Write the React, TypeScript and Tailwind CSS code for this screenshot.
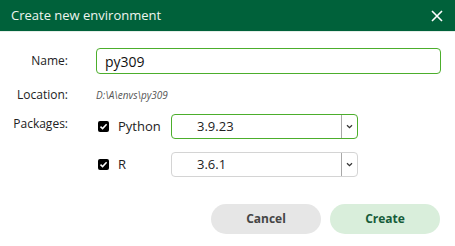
import React from "react";

function Check() {
  return (
    <span className="flex h-[11px] w-[11px] items-center justify-center rounded-[2px] bg-black">
      <svg width="9" height="9" viewBox="0 0 9 9">
        <path d="M1.5 4.6 L3.6 6.6 L7.6 2.3" stroke="white" strokeWidth="1.5" fill="none" />
      </svg>
    </span>
  );
}

function Select({ value, active }: { value: string; active?: boolean }) {
  return (
    <div
      className={
        "flex h-[25px] w-[187px] items-stretch rounded-[4px] border " +
        (active ? "border-[#4cae2c]" : "border-[#d4d4d4]")
      }
    >
      <div className="flex flex-1 items-center pl-[25px] text-[13px] text-[#222]">{value}</div>
      <div className="w-px bg-[#a8a8a8]" />
      <div className="flex w-[15px] items-center justify-center">
        <svg width="7" height="5" viewBox="0 0 7 5">
          <path d="M1 1.2 L3.5 3.6 L6 1.2" stroke="#333" strokeWidth="1.3" fill="none" />
        </svg>
      </div>
    </div>
  );
}

export default function App() {
  return (
    <div
      className="h-[246px] w-[455px] bg-white"
      style={{ fontFamily: '"Open Sans", "Noto Sans", sans-serif' }}
    >
      <div className="flex h-[31px] items-center justify-between bg-[#00613a] pl-[11px] pr-[12px]">
        <span className="text-[13px] text-[#eef5ee]">Create new environment</span>
        <svg width="12" height="12" viewBox="0 0 12 12">
          <path d="M1 1 L11 11 M11 1 L1 11" stroke="white" strokeWidth="1.6" />
        </svg>
      </div>
      <div className="h-px bg-[#e6eee8]" />
      <div className="pt-[16px]">
        <div className="flex items-center">
          <div className="w-[68px] text-right text-[12px] text-[#222]">Name:</div>
          <div className="ml-[28px] flex h-[26px] w-[345px] items-center rounded-[4px] border-[1.5px] border-[#4cae2c] pl-[8px] text-[14px] text-[#111]">
            py309
          </div>
        </div>
        <div className="mt-[12px] flex items-center">
          <div className="w-[68px] text-right text-[12px] text-[#222]">Location:</div>
          <div className="ml-[28px] text-[10px] italic text-[#555]">D:\A\envs\py309</div>
        </div>
        <div className="mt-[10px] flex items-start">
          <div className="w-[68px] pt-[1px] text-right text-[12px] text-[#222]">Packages:</div>
          <div className="ml-[30px] flex flex-col gap-[13px]">
            <div className="flex items-center">
              <Check />
              <span className="ml-[9px] w-[53px] text-[13px] text-[#222]">Python</span>
              <Select value="3.9.23" active />
            </div>
            <div className="flex items-center">
              <Check />
              <span className="ml-[9px] w-[53px] text-[13px] text-[#222]">R</span>
              <Select value="3.6.1" />
            </div>
          </div>
        </div>
        <div className="mt-[27px] flex justify-end gap-[9px] pr-[15px]">
          <button className="h-[30px] w-[110px] rounded-full bg-[#e6e6e6] text-[12px] font-bold text-[#454545]">
            Cancel
          </button>
          <button className="h-[30px] w-[110px] rounded-full bg-[#d9eedb] text-[12px] font-bold text-[#165c3a]">
            Create
          </button>
        </div>
      </div>
    </div>
  );
}
